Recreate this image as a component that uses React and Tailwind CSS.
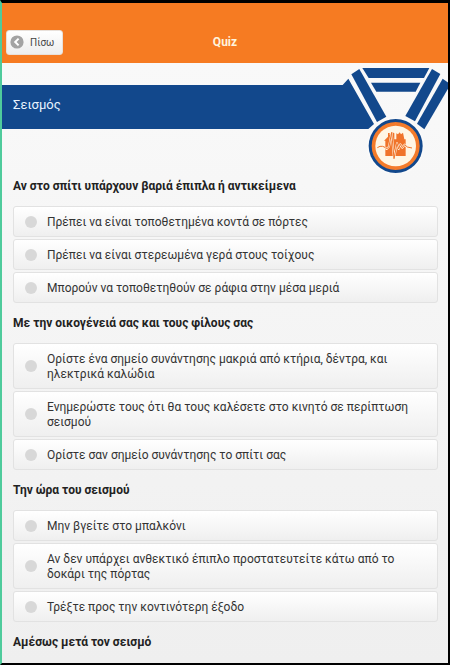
import React from "react";

const sections = [
  {
    id: "furniture",
    title: "Αν στο σπίτι υπάρχουν βαριά έπιπλα ή αντικείμενα",
    options: [
      "Πρέπει να είναι τοποθετημένα κοντά σε πόρτες",
      "Πρέπει να είναι στερεωμένα γερά στους τοίχους",
      "Μπορούν να τοποθετηθούν σε ράφια στην μέσα μεριά",
    ],
  },
  {
    id: "family",
    title: "Με την οικογένειά σας και τους φίλους σας",
    options: [
      "Ορίστε ένα σημείο συνάντησης μακριά από κτήρια, δέντρα, και ηλεκτρικά καλώδια",
      "Ενημερώστε τους ότι θα τους καλέσετε στο κινητό σε περίπτωση σεισμού",
      "Ορίστε σαν σημείο συνάντησης το σπίτι σας",
    ],
  },
  {
    id: "during",
    title: "Την ώρα του σεισμού",
    options: [
      "Μην βγείτε στο μπαλκόνι",
      "Αν δεν υπάρχει ανθεκτικό έπιπλο προστατευτείτε κάτω από το δοκάρι της πόρτας",
      "Τρέξτε προς την κοντινότερη έξοδο",
    ],
  },
  { id: "after", title: "Αμέσως μετά τον σεισμό", options: [] },
];

function Medal() {
  return (
    <svg
      viewBox="60 39 324 330"
      className="absolute -top-[22px] right-0 h-[110px] w-[108px]"
      aria-hidden="true"
    >
      <g fill="#12488c">
        <path d="M58 105H68L85 86L162 222L145 237H58Z" />
        <path d="M94 73L118 57L199 200L171 216Z" />
        <path d="M127 54H328L312 84H146Z" />
        <path d="M153 98H301L287 125H169Z" />
        <path d="M336 57L361 72L285 214L256 198Z" />
        <path d="M368 86L390 102V106L313 238L291 221Z" />
      </g>
      <circle cx="227" cy="288" r="86" fill="#fafafa" />
      <circle cx="227" cy="288" r="81" fill="#12488c" />
      <circle cx="227" cy="288" r="72" fill="#f47b2a" />
      <circle cx="227" cy="288" r="61" fill="#fff6e4" />
      <path
        d="M192 272L204 260V249H209V256L216 246L223 250V268H257V318H196V272ZM229 268V250L234 253L239 247L243 253L249 248L253 268Z"
        fill="#f0742a"
      />
      <path
        d="M190 290L200 297L207 290L215 247L222 326L231 280L236 297L241 283L247 293L254 284L262 291"
        fill="none"
        stroke="#fff6e4"
        strokeWidth="6"
        strokeLinejoin="round"
      />
      <path
        d="M172 293Q180 287 188 289T200 297L207 290L215 247L222 326L231 280L236 297L241 283L247 293L254 284L262 291L276 294"
        fill="none"
        stroke="#f0742a"
        strokeWidth="3"
        strokeLinejoin="round"
      />
    </svg>
  );
}

function Option({ name, label }) {
  return (
    <label className="flex items-center gap-2.5 rounded-[3px] border border-[#e2e2e2] bg-linear-to-b from-white to-[#efefef] pr-6 pl-[11px] text-[12px] leading-[15px] text-[#333]">
      <input
        type="radio"
        name={name}
        className="size-3 shrink-0 appearance-none rounded-full bg-[#d8d8d8] checked:bg-[#12488c]"
      />
      <span className="pt-2 pb-1.5">{label}</span>
    </label>
  );
}

export default function App() {
  return (
    <div className="flex min-h-screen flex-col border-t-[3px] border-r-2 border-b-2 border-l-2 border-t-black border-r-black border-b-black border-l-[#4fcb9c] bg-linear-to-b from-[#fafafa] to-[#efefef] font-['Roboto','Noto_Sans',sans-serif]">
      <header className="grid h-[60px] grid-cols-[1fr_auto_1fr] items-center bg-[#f67b22] pt-[18px] pr-1 pl-1">
        <button
          type="button"
          className="flex h-[25px] items-center gap-1.5 justify-self-start rounded-[3px] border border-[#e8e0da] bg-linear-to-b from-white to-[#eee] pr-2 pl-[3px] text-[10px] text-[#444]"
        >
          <svg viewBox="0 0 14 14" className="size-3.5" aria-hidden="true">
            <circle cx="7" cy="7" r="6.6" fill="#a3a3a3" />
            <path d="M8.6 3.6L5.2 7L8.6 10.4" fill="none" stroke="#fff" strokeWidth="2" />
          </svg>
          Πίσω
        </button>
        <h1 className="text-[12px] leading-4 font-bold text-[#fff3dc]">Quiz</h1>
      </header>

      <div className="relative mt-[22px]">
        <h2 className="mr-[108px] flex h-11 items-center bg-[#12488c] pb-1 pl-[11px] text-[13px] text-[#e8f4ff]">
          Σεισμός
        </h2>
        <Medal />
      </div>

      <main className="flex flex-col gap-3 pt-[49px] pr-2.5 pl-[11px]">
        {sections.map((s) => (
          <fieldset key={s.id} className="flex flex-col">
            <legend className="mb-3 text-[12px] leading-4 font-bold text-[#222]">{s.title}</legend>
            <div className="flex flex-col gap-0.5">
              {s.options.map((o) => (
                <Option key={o} name={s.id} label={o} />
              ))}
            </div>
          </fieldset>
        ))}
      </main>
    </div>
  );
}
